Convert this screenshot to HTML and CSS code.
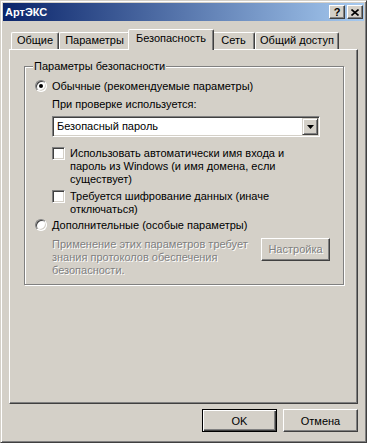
FILE: index.html
```html
<!DOCTYPE html>
<html lang="ru">
<head>
  <meta charset="UTF-8" />
  <title>АртЭКС</title>
  <link rel="stylesheet" href="styles.css">
</head>
<body>
  <div class="window">
    <div class="titlebar">
      <span class="title">АртЭКС</span>
      <div class="tb-buttons">
        <span class="tb-btn">?</span>
        <span class="tb-btn">
          <svg width="8" height="7" viewBox="0 0 8 7"><path d="M0.5 0.5 L7.5 6.5 M7.5 0.5 L0.5 6.5" stroke="#000" stroke-width="1.6"/></svg>
        </span>
      </div>
    </div>

    <div class="tabs">
      <div class="tab t1">Общие</div>
      <div class="tab t2">Параметры</div>
      <div class="tab t3 selected">Безопасность</div>
      <div class="tab t4">Сеть</div>
      <div class="tab t5">Общий доступ</div>
    </div>

    <div class="panel">
      <fieldset class="group">
        <legend>Параметры безопасности</legend>

        <div class="option">
          <span class="radio checked"></span>
          <span>Обычные (рекомендуемые параметры)</span>
        </div>

        <div class="sub">
          <div class="label">При проверке используется:</div>
          <div class="combo">
            <span class="combo-text">Безопасный пароль</span>
            <span class="combo-btn">
              <svg width="7" height="4" viewBox="0 0 7 4"><polygon points="0,0 7,0 3.5,4" fill="#000"/></svg>
            </span>
          </div>

          <div class="check first">
            <span class="box"></span>
            <span>Использовать автоматически имя входа и<br>пароль из Windows (и имя домена, если<br>существует)</span>
          </div>
          <div class="check second">
            <span class="box"></span>
            <span>Требуется шифрование данных (иначе<br>отключаться)</span>
          </div>
        </div>

        <div class="option second">
          <span class="radio"></span>
          <span>Дополнительные (особые параметры)</span>
        </div>

        <div class="sub adv">
          <p class="disabled">Применение этих параметров требует<br>знания протоколов обеспечения<br>безопасности.</p>
          <button class="btn setup" disabled><span class="disabled">Настройка</span></button>
        </div>
      </fieldset>
    </div>

    <div class="footer">
      <button class="btn default">OK</button>
      <button class="btn">Отмена</button>
    </div>
  </div>
</body>
</html>
```

FILE: styles.css
```css
body {
  margin: 0;
  font-family: "Liberation Sans", Arial, sans-serif;
  font-size: 11px;
  color: #000;
}

.window {
  box-sizing: border-box;
  width: 367px;
  height: 443px;
  padding: 2px;
  background: #d4d0c8;
  border: 1px solid;
  border-color: #d4d0c8 #404040 #404040 #d4d0c8;
  box-shadow: inset 1px 1px #fff, inset -1px -1px #808080;
  display: flex;
  flex-direction: column;
}

/* TITLE BAR */
.titlebar {
  height: 18px;
  padding: 0 1px 0 2px;
  background: linear-gradient(to right, #0a246a, #a6caf0);
  display: flex;
  align-items: center;
  justify-content: space-between;
}

.title {
  color: #fff;
  font-weight: bold;
}

.tb-buttons {
  display: flex;
  gap: 2px;
}

.tb-btn {
  box-sizing: border-box;
  width: 16px;
  height: 14px;
  background: #d4d0c8;
  border: 1px solid;
  border-color: #fff #404040 #404040 #fff;
  box-shadow: inset -1px -1px #808080;
  display: flex;
  align-items: center;
  justify-content: center;
  font-weight: bold;
  font-size: 11px;
  line-height: 1;
}

/* TABS */
.tabs {
  display: flex;
  align-items: flex-end;
  height: 20px;
  margin: 8px 0 0 8px;
}

.tab {
  box-sizing: border-box;
  height: 17px;
  line-height: 15px;
  text-align: center;
  border: 1px solid;
  border-bottom: none;
  border-color: #fff #404040 transparent #fff;
  border-radius: 2px 2px 0 0;
  box-shadow: inset -1px 0 #808080;
}

.t1 { width: 48px; }
.t2 { width: 71px; }
.t3 { width: 82px; }
.t4 { width: 43px; }
.t5 { width: 84px; }

.tab.selected {
  position: relative;
  z-index: 1;
  width: 86px;
  height: 21px;
  line-height: 17px;
  margin: 0 -2px -1px -2px;
  background: #d4d0c8;
}

/* PANEL */
.panel {
  box-sizing: border-box;
  height: 355px;
  margin: 0 6px 0 6px;
  padding: 10px 0 0 14px;
  border: 1px solid;
  border-color: #fff #404040 #404040 #fff;
  box-shadow: inset -1px -1px #808080;
}

.group {
  box-sizing: border-box;
  width: 320px;
  margin: 0;
  padding: 6px 0 7px 10px;
  border: 1px solid #808080;
  box-shadow: inset 1px 1px #fff, 1px 1px #fff;
}

.group legend {
  margin-left: -2px;
  padding: 0 1px;
  line-height: 13px;
  background: #d4d0c8;
}

.option {
  display: flex;
  align-items: center;
  gap: 5px;
  height: 13px;
}

.option.second {
  margin-top: 2px;
}

.radio {
  box-sizing: border-box;
  width: 12px;
  height: 12px;
  border-radius: 50%;
  background: #fff;
  border: 1px solid;
  border-color: #808080 #fff #fff #808080;
  box-shadow: inset 1px 1px #404040, inset -1px -1px #d4d0c8;
  display: flex;
  align-items: center;
  justify-content: center;
}

.radio.checked::after {
  content: "";
  width: 4px;
  height: 4px;
  border-radius: 50%;
  background: #000;
}

.sub {
  padding-left: 17px;
  line-height: 13px;
}

.label {
  margin-top: 6px;
}

.combo {
  box-sizing: border-box;
  width: 268px;
  height: 21px;
  margin-top: 5px;
  padding: 1px;
  background: #fff;
  border: 1px solid;
  border-color: #808080 #fff #fff #808080;
  box-shadow: inset 1px 1px #404040, inset -1px -1px #d4d0c8;
  display: flex;
  align-items: center;
  justify-content: space-between;
}

.combo-text {
  padding-left: 3px;
}

.combo-btn {
  box-sizing: border-box;
  width: 16px;
  height: 17px;
  background: #d4d0c8;
  border: 1px solid;
  border-color: #d4d0c8 #404040 #404040 #d4d0c8;
  box-shadow: inset 1px 1px #fff, inset -1px -1px #808080;
  display: flex;
  align-items: center;
  justify-content: center;
}

.check {
  display: flex;
  align-items: flex-start;
  gap: 5px;
}

.check.first { margin-top: 10px; }
.check.second { margin-top: 4px; }

.box {
  box-sizing: border-box;
  flex: none;
  width: 13px;
  height: 13px;
  background: #fff;
  border: 1px solid;
  border-color: #808080 #fff #fff #808080;
  box-shadow: inset 1px 1px #404040, inset -1px -1px #d4d0c8;
}

.adv {
  margin-top: 7px;
  display: flex;
  align-items: flex-start;
  justify-content: space-between;
  padding-right: 13px;
}

.adv p {
  margin: 0;
}

.disabled {
  color: #808080;
  text-shadow: 1px 1px #fff;
}

/* BUTTONS */
.btn {
  box-sizing: border-box;
  width: 75px;
  height: 23px;
  padding: 0;
  font: inherit;
  color: #000;
  background: #d4d0c8;
  border: 1px solid;
  border-color: #fff #404040 #404040 #fff;
  box-shadow: inset -1px -1px #808080;
}

.btn.setup {
  width: 69px;
}

.btn.default {
  border-color: #000;
  box-shadow: inset 1px 1px #fff, inset -1px -1px #404040, inset -2px -2px #808080;
}

.footer {
  display: flex;
  justify-content: flex-end;
  gap: 6px;
  margin-top: 5px;
  padding-right: 6px;
}
```
